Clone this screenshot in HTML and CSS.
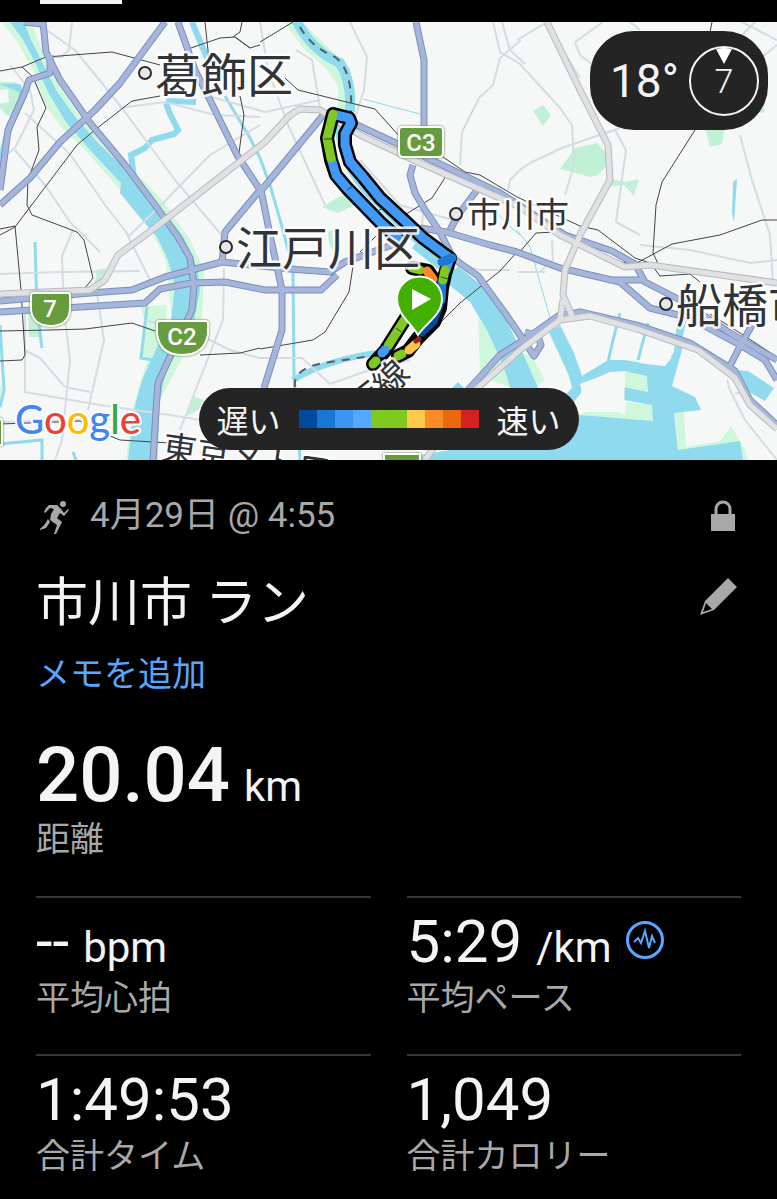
FILE: index.html
```html
<!DOCTYPE html>
<html lang="ja">
<head>
<meta charset="utf-8">
<meta name="viewport" content="width=device-width, initial-scale=1">
<title>市川市 ラン</title>
<link rel="stylesheet" href="styles.css">
</head>
<body>
<header class="tabs"><span class="tab-indicator"></span></header>
<section class="map" aria-label="ルート">
<svg class="map-canvas" viewBox="0 22 777 438" role="img" aria-label="地図">
  <rect class="land" y="22" width="777" height="438"/>
  <!-- parks -->
  <g class="park">
    <path d="M0 82L16 82 24 94 18 112 8 116 0 108Z"/>
    <path d="M533 111L543 105 551 115 543 126Z"/>
    <path d="M560 169L575 148 597 143 608 155 607 165 598 175 590 177Z"/>
    <path d="M611 179L626 182 639 179 634 196 624 185 610 186Z"/>
    <path d="M706 130L724 130 722 144 710 147Z"/>
    <path d="M758 112L764 106 764 113Z"/>
    <path d="M322 207L335 199 355 190 361 202 338 213Z"/>
    <path d="M328 232L332 230 337 262 329 242Z"/>
    <path d="M97 270L106 268 104 280 95 285Z"/>
    <path d="M28 310L42 310 42 337 29 337Z"/>
    <path d="M192 396L204 400 198 410 187 416Z"/>
  </g>
  <g class="park-pale">
    <path d="M2 22L16 40 34 72 45 105 62 128 88 153 120 190 155 237 166 262 172 320 146 365 132 410 126 460 158 460 160 400 202 320 204 270 190 240 164 202 110 145 80 117 62 90 44 55 31 22Z"/>
    <path d="M141 306L167 305 166 322 152 360 139 359 146 330Z"/>
    <path d="M284 22L305 50 325 67 338 86 338 115 352 115 356 95 350 68 335 54 302 22Z"/>
    <path d="M478 306L490 330 508 376 512 388 480 376Z"/>
    <path d="M484 290L500 300 522 334 522 345Z"/>
    <path d="M625 371L648 376 648 392 625 388Z"/>
    <path d="M626 402L652 405 654 422 625 417Z"/>
    <path d="M580 415L600 403 625 415 645 421Z"/>
    <path d="M674 412L684 412 686 447 720 441 731 426 745 450 748 460 680 460Z"/>
    <path d="M520 351L533 358 545 380 534 387Z"/>
    <path d="M0 385L4 396 0 412Z"/>
  </g>
  <!-- water -->
  <g class="water">
    <path d="M10 22L22 38 35 62 48 92 66 122 90 150 121 183 120 193 138 215 157 237 168 260 175 285 171 320 158 345 142 380 134 410 128 460 157 460 160 400 165 375 180 345 194 320 200 290 198 270 184 238 165 213 140 183 100 145 76 118 56 90 42 62 31 40 24 22Z"/>
    <path d="M446 282L470 302 487 330 503 365 511 390 539 390 525 358 507 322 487 290 458 266Z"/>
    <path d="M549 332L560 325 574 353 582 376 605 362 609 360 625 360 648 364 665 366 674 352 676 331 680 315 688 315 683 335 682 350 672 386 695 397 701 410 674 413 678 450 740 441 743 460 390 460 450 450 505 420 580 415 653 421 652 405 624 400 623 387 648 392 647 376 625 371 602 376 580 384 582 392 572 404 505 410 545 400 560 400 572 388 569 376Z"/>
    <path d="M731 374L735 370 748 371 774 388 765 401 739 386Z"/>
    <path d="M0 84L20 84 27 96 14 125 7 145 0 175 0 150 7 123 18 105 19 92Z"/>
    <path d="M733 182L737 179 734 222 732 213Z"/>
    <path d="M452 388L458 382 466 390Z"/>
  </g>
  <g class="land">
    <path d="M594 379L610 372 625 371 624 412 579 412 582 383Z"/>
    <path d="M638 363L672 357 665 366Z"/>
    <path d="M0 90L8 89 9 102 0 104Z"/>
  </g>
  <g class="stream">
    <path class="w10" d="M296 20Q311 50 340 63Q352 82 350 112"/>
    <path class="w7" d="M338 122Q338 165 372 198Q405 232 455 274"/>
    <path class="w10" d="M415 244L455 276"/>
    <path class="w7" d="M192 22L207 58M166 103L170 114 178 130 174 134 152 140 145 148 131 155 134 178M166 101L196 102"/>
    <path class="w3" d="M225 96L250 138 260 158 270 185 283 230 293 270 294 375 300 460"/>
    <path class="w7" d="M293 380Q330 358 385 352"/>
    <path class="w3" d="M35 242L37 310 42 348M0 325L4 390 0 407M147 307L141 358 152 360M0 444L42 440 42 460M73 452L76 460"/>
    <path class="w1" d="M363 99L420 114M517 230L530 247 550 318M480 190Q500 220 520 235"/>
    <path class="w3" d="M620 313L613 340 608 362M648 323L638 360"/>
  </g>
  <!-- minor roads -->
  <g class="minor">
    <path d="M48 31L75 50 122 108 175 180 230 245M72 22L69 50 62 57 48 57M10 65L30 90 34 110 15 148 0 160M25 113L70 154 105 205 130 237M15 150L45 185 70 222 100 252"/>
    <path d="M120 108L165 102 215 115 260 117M260 22L268 70 288 125 325 205M260 125L210 155 160 206 130 235M208 96L265 112 320 100"/>
    <path d="M296 50L312 60 320 108M350 22L367 57 364 90 354 120M360 160L400 205 460 222M777 40L742 22M755 22L735 42 722 42M777 45L740 75 705 130"/>
    <path d="M493 22L500 52 520 64 560 108 572 125 574 165 565 195M502 22L510 50 525 64M521 40L500 58 493 85 479 98 462 132 460 165M545 22L580 78M517 40L547 22M603 22L575 42 580 55 610 78M508 190L510 180 520 170 530 163 562 148 620 128"/>
    <path d="M615 130L626 150 616 222 640 235M740 135L752 180 770 235 773 282M540 272L553 260 552 240M640 245L690 250 750 263 777 260M517 272L545 272M510 270L480 270 460 265"/>
    <path d="M0 274L60 272 140 271M73 230L62 256 64 310 70 360 65 410 62 440 55 460M125 230L150 280M95 280L104 340 88 410M24 350L40 358 65 387 90 392M25 310L25 392 100 405 170 415 200 420M224 268L223 320 180 430M145 320L200 335 230 350 260 358M260 358L302 358 330 384M330 384L370 370 410 360M0 422L80 420M727 380L730 390 745 420 777 460M735 394L740 392"/>
    <path d="M630 22L640 30M423 212L422 228"/>
  </g>
  <!-- railways -->
  <g class="rail">
    <path d="M0 71L22 67 46 57 112 52 160 65M22 67L33 77 46 108 37 127 39 150 28 180 27 205 32 215 77 232 84 240 93 278 85 288M0 235L15 227 77 145 96 129 132 101 160 96"/>
    <path d="M0 229L15 226 21 290 25 355 22 360 0 361M188 49L220 38 235 37 250 48M205 22L209 60M242 22L240 32 233 37M235 37L250 48 260 45M240 96L244 115 239 153"/>
    <path d="M260 42L293 22M285 78L298 90 375 109 400 137M440 155L465 172 480 175 517 197M448 173L432 198 403 216M517 197L580 226 598 230 635 258 650 263 660 276 690 274 700 282M712 22L710 32M695 130L662 182 656 205 653 253 660 268M777 220L762 220 720 235 672 244 635 264 605 260 555 232 536 233 517 255M517 252L500 271 460 303 440 323M355 253L349 292 325 332 313 340 260 349M0 331L50 330 85 329 132 323 155 331M200 355L240 353 260 348M0 424L55 422 80 421 95 430 120 440 170 443M710 314L740 333 777 357M377 235L360 252"/>
  </g>
  <!-- motorways: casing below, fill above -->
  <g class="road-case">
    <path d="M43 22L46 52 60 80 90 123 125 165 155 205 178 237 190 258 194 285 192 310 179 337 158 383 156 410 153 460"/>
    <path d="M0 205L30 178 60 142 95 110 120 83 165 22M0 190L8 130 25 92 29 80 50 73 50 55M178 22L195 70 210 100 237 155 260 190 225 232 222 262M24 22L42 24"/>
    <path d="M260 192L325 113M260 185L270 235 282 290 282 330 264 388M0 301L90 293 132 290 165 277 222 262 290 269 330 272 345 262 400 242M0 312L80 307 145 303 160 289 192 283 225 282 265 290 321 290 337 275"/>
    <path d="M357 125L400 145 440 164 500 193 565 235 612 251 635 264 645 282 680 300 730 333 777 360M416 22L424 60 424 130M413 165L410 175 415 193 425 210 440 232 453 258 478 276 505 313 520 335 534 356 541 345 538 336 525 332"/>
    <path d="M420 228L446 232 490 245 517 252 560 268 620 282 650 308 690 318 740 345 765 360 777 380M477 190L458 215 450 230M608 280L645 280M752 325L738 350 730 366"/>
    <path d="M468 390L500 355 530 336 558 316 580 312 640 326 690 343 735 371 750 400 777 425"/>
  </g>
  <g class="road-fill">
    <path d="M43 22L46 52 60 80 90 123 125 165 155 205 178 237 190 258 194 285 192 310 179 337 158 383 156 410 153 460"/>
    <path d="M0 205L30 178 60 142 95 110 120 83 165 22M0 190L8 130 25 92 29 80 50 73 50 55M178 22L195 70 210 100 237 155 260 190 225 232 222 262M24 22L42 24"/>
    <path d="M260 192L325 113M260 185L270 235 282 290 282 330 264 388M0 301L90 293 132 290 165 277 222 262 290 269 330 272 345 262 400 242M0 312L80 307 145 303 160 289 192 283 225 282 265 290 321 290 337 275"/>
    <path d="M357 125L400 145 440 164 500 193 565 235 612 251 635 264 645 282 680 300 730 333 777 360M416 22L424 60 424 130M413 165L410 175 415 193 425 210 440 232 453 258 478 276 505 313 520 335 534 356 541 345 538 336 525 332"/>
    <path d="M420 228L446 232 490 245 517 252 560 268 620 282 650 308 690 318 740 345 765 360 777 380M477 190L458 215 450 230M608 280L645 280M752 325L738 350 730 366"/>
    <path d="M468 390L500 355 530 336 558 316 580 312 640 326 690 343 735 371 750 400 777 425"/>
  </g>
  <g class="toll-case">
    <path d="M0 294L90 290 105 280 118 255 148 233 265 142 290 115 300 109 320 110 360 135 420 163 520 207 560 235 625 267 650 265 777 283M547 22L580 90 608 145 610 180 580 235 565 270 563 295 572 316M563 300L560 320M425 460L472 393 520 350 560 320 590 316 640 330 698 350 735 378 750 405 777 429"/>
  </g>
  <g class="toll-fill">
    <path d="M0 294L90 290 105 280 118 255 148 233 265 142 290 115 300 109 320 110 360 135 420 163 520 207 560 235 625 267 650 265 777 283M547 22L580 90 608 145 610 180 580 235 565 270 563 295 572 316M563 300L560 320M425 460L472 393 520 350 560 320 590 316 640 330 698 350 735 378 750 405 777 429"/>
  </g>
  <path class="ferry" d="M300 27Q311 47 335 57Q353 70 351 112M295 387Q292 367 330 362L385 354"/>
  <!-- highway shields -->
  <g class="shield">
    <path d="M402 127H440Q443 127 443 130V153Q443 157 439 157H403Q399 157 399 153V130Q399 127 402 127Z"/>
    <path d="M33 293H68Q70 293 70 296V309Q69 326 50 326Q32 325 31 309V296Q31 293 33 293Z"/>
    <path d="M159 321H206Q208 321 208 324V334Q205 355 182 355Q160 355 157 334V324Q157 321 159 321Z"/>
    <path d="M384 454H420V475H384ZM-20 418H-2Q2 418 2 422V445H-20Z"/>
  </g>
  <g class="shield-text">
    <text x="421" y="151">C3</text><text x="50" y="317">7</text><text x="182" y="345">C2</text>
  </g>
  <!-- track -->
  <g class="track-edge">
    <path d="M333 114L327 138 331 160 336 175 347 188 380 222 400 240M333 114L349 118 351 123 345 134 345 145 350 162 363 177 380 198 407 223 423 238 450 258 445 274 442 288 440 308 434 322 418 338 408 351 398 356M412 268L428 271 434 280M409 313L385 351 373 364"/>
  </g>
  <g class="track">
    <path class="c-blue" d="M331 158L336 175 347 188 380 222 400 240M336 115L349 118 351 123 345 134 345 145 350 162 363 177 380 198 407 223 423 238 450 258 446 270"/>
    <path class="c-mid" d="M442 262L452 258M442 282L441 300"/>
    <path class="c-green" d="M333 114L327 138 331 158M445 270L443 280M409 313L388 346M412 268L420 270M376 361L373 364"/>
    <path class="c-orange" d="M427 271L433 279"/>
    <path class="c-deep" d="M440 305L434 322 422 333"/>
    <path class="c-blue" d="M385 350L382 353"/>
    <path class="c-green" d="M402 354L398 356"/>
    <path class="c-yellow" d="M416 344L409 350"/>
    <path class="c-red" d="M419 339L416 341"/>
  </g>
  <path class="ticks" d="M396 328L403 333M324 139L333 139M347 190L353 186M376 212L383 208M441 277L448 279"/>
  <!-- place names -->
  <g class="dot"><circle cx="145" cy="73" r="6"/><circle cx="226" cy="247" r="6"/><circle cx="456" cy="214" r="6"/><circle cx="666" cy="304" r="6"/></g>
  <g class="place">
    <text class="city" x="155" y="92">葛飾区</text>
    <text class="city" x="236" y="265">江戸川区</text>
    <text class="town" x="467" y="227">市川市</text>
    <text class="city" x="676" y="322">船橋市</text>
    <text class="town" x="0" y="0" transform="translate(387 399) rotate(-44)">線</text>
    <text class="town" x="0" y="0" transform="translate(359 420) rotate(-38)">西</text>
    <text class="town" x="0" y="0" transform="translate(161 459) rotate(8)">東京メトロ</text>
  </g>
  <!-- start marker -->
  <path class="pin" d="M418 335C410 321 397 315 397 299A22 22 0 0 1 442 299C442 315 426 323 418 335Z"/>
  <path class="pin-play" d="M412 289V310L431 299Z"/>
  <text class="brand" x="15" y="434"><tspan fill="#4285f4">G</tspan><tspan fill="#ea4335">o</tspan><tspan fill="#fbbc05">o</tspan><tspan fill="#4285f4">g</tspan><tspan fill="#34a853">l</tspan><tspan fill="#ea4335">e</tspan></text>
</svg>
<div class="weather">
  <span class="temp">18°</span>
  <span class="wind"><svg class="wind-arrow" viewBox="0 0 16 16" aria-hidden="true"><path d="M0 1Q8-1 16 1L8 16Z"/></svg>7</span>
</div>
<div class="legend">
  <span>遅い</span>
  <span class="scale"><i class="s1"></i><i class="s2"></i><i class="s3"></i><i class="s4"></i><i class="s5"></i><i class="s5"></i><i class="s6"></i><i class="s7"></i><i class="s8"></i><i class="s9"></i></span>
  <span>速い</span>
</div>
</section>
<main class="details">
<div class="meta">
  <svg class="runner" viewBox="0 0 36 40" aria-hidden="true"><circle cx="27" cy="8" r="3"/><path d="M10 12L13 9 21 9 25 13 28 17 32 13 33 14 28 20 24 17 21 22 26 26 24 30 20 38H18L21 29 14 24 15 18 18 13 14 12 9 17 8 16ZM12 23L14 26 10 32 4 34 4 33 9 28Z"/></svg>
  <span class="date">4月29日 @ 4:55</span>
  <svg class="lock" viewBox="0 0 24 32" role="img" aria-label="非公開"><path d="M5 15V9a7 7 0 0 1 14 0V15" fill="none" stroke="#a8a8a8" stroke-width="3"/><path d="M0 14H24V31H0Z"/></svg>
</div>
<div class="title-row">
  <h1 class="title">市川市 ラン</h1>
  <button class="edit" type="button" aria-label="編集"><svg viewBox="0 0 38 38" aria-hidden="true"><path d="M28 0L37 9 14 32 0 37 5 23ZM6 25L3 34 12 31Z" fill-rule="evenodd"/></svg></button>
</div>
<a class="memo" href="#memo">メモを追加</a>
<div class="distance"><div class="big">20.04<span class="unit">km</span></div><div class="label">距離</div></div>
<div class="stats">
  <div class="stat"><div class="value">--<span class="unit">bpm</span></div><div class="label">平均心拍</div></div>
  <div class="stat"><div class="value">5:29<span class="unit">/km</span><button class="pulse" type="button" aria-label="ペース分析"><svg viewBox="0 0 38 38" aria-hidden="true"><circle cx="19" cy="19" r="17.5" stroke-width="3"/><path d="M8 21L12 17 15 22 19 10 23 27 26 15 29 22" stroke-width="2"/></svg></button></div><div class="label">平均ペース</div></div>
  <div class="stat"><div class="value">1:49:53</div><div class="label">合計タイム</div></div>
  <div class="stat"><div class="value">1,049</div><div class="label">合計カロリー</div></div>
</div>
</main>
</body>
</html>
```
FILE: styles.css
```css
* { box-sizing: border-box; }
body {
  margin: 0;
  min-height: 100vh;
  background: #000;
  color: #f4f4f4;
  font-family: Roboto, "Noto Sans CJK JP", sans-serif;
}
button { padding: 0; border: 0; background: none; cursor: pointer; }
svg { display: block; }

.tabs { height: 22px; padding-left: 40px; }
.tab-indicator { display: block; width: 82px; height: 4px; background: #f2f2f2; }

/* Map */
.map { position: relative; overflow: hidden; }
.map-canvas { width: 100%; height: auto; }
.land { fill: #f6f7f7; }
.park { fill: #c0f0d5; }
.park-pale { fill: #cff7dc; }
.water { fill: #8fdaec; }
.stream { fill: none; stroke: #8fdaec; }
.w10 { stroke-width: 10px; }
.w7 { stroke-width: 6px; }
.w3 { stroke-width: 3px; }
.w1 { stroke-width: 1px; }
.minor { fill: none; stroke: #d4dce4; stroke-width: 2px; stroke-linejoin: round; }
.rail { fill: none; stroke: #444; stroke-width: 1px; }
.road-case, .road-fill, .toll-case, .toll-fill { fill: none; stroke-linejoin: round; }
.road-case { stroke: #7b8fbc; stroke-width: 7px; }
.road-fill { stroke: #a5b6da; stroke-width: 5px; }
.toll-case { stroke: #b9babd; stroke-width: 7px; }
.toll-fill { stroke: #e0e1e4; stroke-width: 5px; }
.ferry { fill: none; stroke: #555e66; stroke-width: 2px; stroke-dasharray: 8 7; }
.shield { fill: #679c3e; stroke: #fff; stroke-width: 2px; filter: drop-shadow(0 0 1px #557a35); }
.shield-text { fill: #fff; font: 500 24px Roboto, sans-serif; text-anchor: middle; }
.dot { fill: #e8e8e8; stroke: #282b2e; stroke-width: 2px; }
.place { fill: #303438; stroke: #fff; stroke-width: 5px; stroke-linejoin: round; stroke-opacity: 0.85; paint-order: stroke; font-family: "Noto Sans CJK JP", sans-serif; }
.city { font-size: 46px; font-weight: 400; }
.town { font-size: 34px; font-weight: 400; }
.track-edge, .track { fill: none; stroke-linejoin: round; stroke-linecap: round; }
.track-edge { stroke: #050505; stroke-width: 14px; }
.track { stroke-width: 9px; }
.c-blue { stroke: #4098f7; }
.c-mid { stroke: #1f78d4; }
.c-deep { stroke: #064a9e; stroke-width: 7px; }
.c-green { stroke: #7fc922; }
.c-yellow { stroke: #fcc745; }
.c-orange { stroke: #f98927; }
.c-red { stroke: #9f1c1c; stroke-width: 5px; }
.ticks { stroke: #245; stroke-width: 1px; }
.pin { fill: #43b000; stroke: #fff; stroke-width: 2px; }
.pin-play { fill: #fff; }
.brand { font: 500 40px Lato, sans-serif; stroke: #fff; stroke-width: 4px; stroke-linejoin: round; paint-order: stroke; }

.weather {
  position: absolute;
  top: 9px;
  right: 9px;
  display: flex;
  align-items: center;
  justify-content: space-between;
  height: 99px;
  width: 178px;
  padding: 0 9px 0 20px;
  border-radius: 44px;
  background: #242424;
}
.temp { font-size: 46px; font-weight: 400; }
.wind {
  position: relative;
  display: grid;
  place-items: center;
  width: 70px;
  height: 70px;
  border: 2px solid #f4f4f4;
  border-radius: 50%;
  font-size: 34px;
  font-weight: 300;
}
.wind-arrow { position: absolute; top: 0; left: 25px; width: 16px; height: 16px; fill: #fff; }
.legend {
  position: absolute;
  bottom: 10px;
  left: 50%;
  transform: translateX(-50%);
  display: flex;
  align-items: center;
  gap: 18px;
  height: 62px;
  padding: 0 18px;
  border-radius: 31px;
  background: #242424;
  font-size: 32px;
  white-space: nowrap;
}
.scale { display: flex; }
.scale i { width: 18px; height: 18px; }
.s1 { background: #004a9e; }
.s2 { background: #1976d2; }
.s3 { background: #3d95f3; }
.s4 { background: #57a7ff; }
.s5 { background: #80c91f; }
.s6 { background: #fdcb4d; }
.s7 { background: #fb8c28; }
.s8 { background: #ea690e; }
.s9 { background: #d52121; }

/* Activity details */
.details { padding: 36px 36px 0; }
.meta { display: flex; align-items: center; height: 40px; color: #a8a8a8; fill: #a8a8a8; }
.runner { width: 36px; height: 40px; margin-right: 18px; }
.date { flex: 1; font-size: 35px; line-height: 40px; }
.lock { width: 24px; height: 32px; margin-right: 6px; }
.title-row { display: flex; align-items: center; justify-content: space-between; margin-top: 36px; }
.title { margin: 0; font-size: 52px; font-weight: 400; line-height: 64px; }
.edit { width: 38px; height: 38px; margin: 0 3px 14px 0; fill: #a8a8a8; }
.memo { display: block; width: max-content; margin-top: 18px; color: #57a7ff; font-size: 34px; line-height: 40px; text-decoration: none; }
.distance { margin: 37px 0; }
.big, .value { display: flex; align-items: baseline; gap: 14px; white-space: nowrap; }
.big { font-size: 76px; font-weight: 500; line-height: 88px; }
.unit { font-size: 42px; font-weight: 400; line-height: 1; }
.label { color: #a8a8a8; font-size: 34px; line-height: 40px; }
.stats { display: grid; grid-template-columns: 1fr 1fr; column-gap: 36px; row-gap: 36px; }
.stat { border-top: 2px solid #363636; padding-top: 8px; }
.value { font-size: 60px; line-height: 72px; }
.pulse { align-self: center; width: 38px; height: 38px; margin-bottom: 4px; }
.pulse svg { fill: none; stroke: #57a7ff; }
```
